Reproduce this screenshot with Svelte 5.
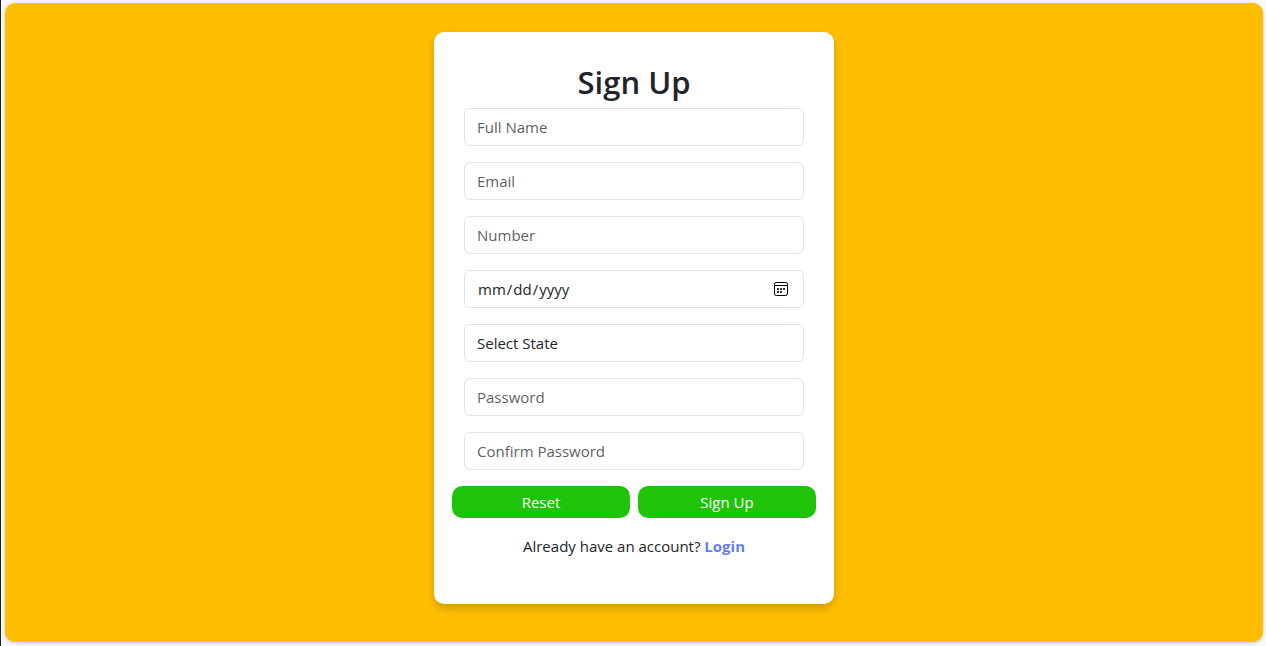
<script>
  let state = $state('');
  const states = ['California', 'Florida', 'New York', 'Texas'];
</script>

<main class="page">
  <section class="panel">
    <div class="card">
      <h1>Sign Up</h1>
      <form>
        <input class="field" type="text" placeholder="Full Name" aria-label="Full Name" />
        <input class="field" type="email" placeholder="Email" aria-label="Email" />
        <input class="field" type="tel" placeholder="Number" aria-label="Number" />
        <div class="date">
          <input class="field" type="date" aria-label="Date of birth" />
          <svg viewBox="0 0 14 14" width="14" height="14" aria-hidden="true">
            <rect x="0.5" y="0.5" width="13" height="13" rx="1.8" fill="none" stroke="#000" />
            <path d="M1 3.5h12" stroke="#000" />
            <path
              d="M3 6h2v2H3zM6 6h2v2H6zM9 6h2v2H9zM3 9h2v2H3zM6 9h2v2H6z"
              fill="#333"
            />
          </svg>
        </div>
        <select class="field" aria-label="State" bind:value={state}>
          <option value="">Select State</option>
          {#each states as name}
            <option value={name}>{name}</option>
          {/each}
        </select>
        <input class="field" type="password" placeholder="Password" aria-label="Password" />
        <input class="field" type="password" placeholder="Confirm Password" aria-label="Confirm Password" />
        <div class="actions">
          <button type="reset">Reset</button>
          <button type="submit">Sign Up</button>
        </div>
      </form>
      <p>Already have an account? <a href="#login">Login</a></p>
    </div>
  </section>
</main>

<style>
  :global(body) {
    background: #f8f9fa;
  }

  .page,
  .page * {
    box-sizing: border-box;
  }

  .page {
    min-height: 100vh;
    padding: 3px 3px 4px 4px;
    border-left: 1px solid #212121;
    font-family: 'Segoe UI', 'Open Sans', 'Noto Sans', sans-serif;
    font-size: 15px;
    line-height: 24px;
    color: #212529;
  }

  .panel {
    display: flex;
    justify-content: center;
    padding: 29px 16px 38px;
    border-radius: 10px;
    background: #ffbf00;
    box-shadow: 0 1px 4px rgba(0, 0, 0, 0.2);
  }

  .card {
    width: 100%;
    max-width: 400px;
    padding: 30px;
    border-radius: 10px;
    background: #fff;
    box-shadow: 0 4px 10px rgba(0, 0, 0, 0.2);
  }

  h1 {
    margin: 0 0 6px;
    font-size: 31px;
    font-weight: 600;
    line-height: 40px;
    text-align: center;
  }

  form {
    display: flex;
    flex-direction: column;
    gap: 16px;
  }

  .field {
    appearance: none;
    display: block;
    width: 100%;
    height: 38px;
    margin: 0;
    padding: 6px 12px;
    border: 1px solid #dee2e6;
    border-radius: 6px;
    background: #fff;
    color: #212529;
    font: inherit;
  }

  .field::placeholder {
    color: rgba(33, 37, 41, 0.75);
    opacity: 1;
  }

  .field::-webkit-datetime-edit,
  .field::-webkit-datetime-edit-fields-wrapper {
    padding: 0;
  }

  .field::-webkit-calendar-picker-indicator {
    opacity: 0;
  }

  .date {
    position: relative;
  }

  .date svg {
    position: absolute;
    top: 12px;
    right: 16px;
    pointer-events: none;
  }

  .actions {
    display: flex;
    gap: 8px;
    margin: 0 -12px;
  }

  button {
    flex: 1;
    height: 32px;
    padding: 0 12px;
    border: 0;
    border-radius: 10px;
    background: #1fc408;
    color: #fff;
    font: inherit;
    cursor: pointer;
  }

  p {
    margin: 16px 0;
    text-align: center;
  }

  a {
    color: #667eea;
    font-weight: 700;
    text-decoration: none;
  }
</style>
